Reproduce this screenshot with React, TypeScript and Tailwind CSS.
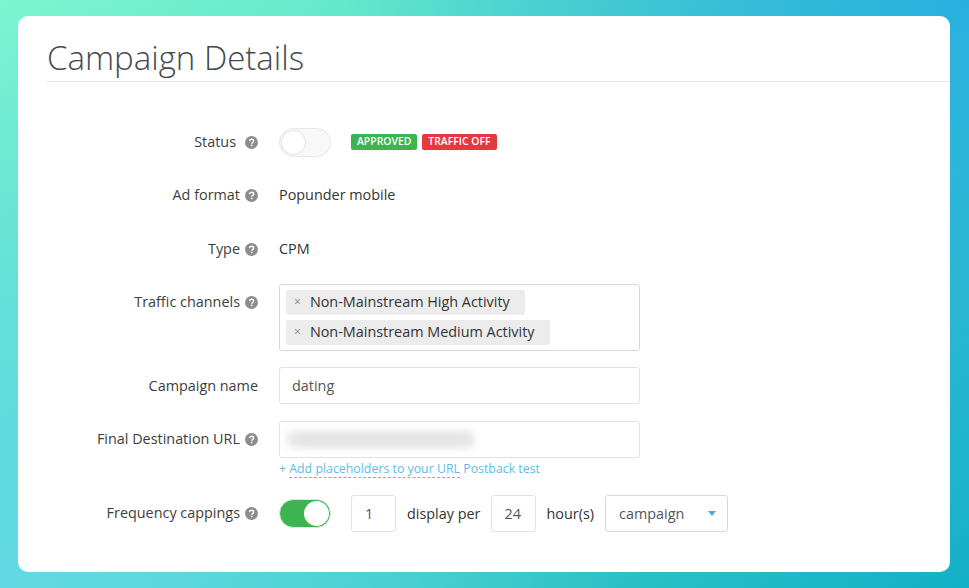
const font = "font-['Open_Sans',sans-serif]";

function Help() {
  return (
    <svg viewBox="0 0 24 24" className="ml-[5px] h-[13px] w-[13px] shrink-0">
      <circle cx="12" cy="12" r="12" fill="#8c8c8c" />
      <path d="M8.2 9.4c.2-2.2 1.8-3.5 3.9-3.5 2.2 0 3.8 1.3 3.8 3.2 0 1.5-.8 2.3-2 3.1-.9.6-1.3 1-1.3 2" fill="none" stroke="#fff" strokeWidth="2.6" />
      <rect x="10.9" y="16" width="2.8" height="2.8" fill="#fff" />
    </svg>
  );
}

type RowProps = {
  label: string;
  help?: boolean;
  children: React.ReactNode;
  className?: string;
  labelClass?: string;
};

function Row({ label, help = true, children, className = '', labelClass = '' }: RowProps) {
  return (
    <div className={`flex ${className}`}>
      <div className="flex w-[211px] shrink-0 items-center justify-end text-[14.4px] text-[#3d3d3d]">
        <span className={labelClass}>{label}</span>
        {help && <Help />}
      </div>
      <div className="ml-[21px] flex items-center text-[14.4px] text-[#333]">{children}</div>
    </div>
  );
}

function Toggle({ on }: { on?: boolean }) {
  return (
    <div className={`flex h-[29px] w-[52px] items-center rounded-full border border-[#e6e6e6] ${on ? 'justify-end border-[#3cb44f] bg-[#3cb44f]' : 'bg-[#f8f8f8]'}`}>
      <div className={`h-[25px] w-[25px] rounded-full bg-white ${on ? 'mr-px' : 'ml-px border border-[#e2e2e2]'}`} />
    </div>
  );
}

function Tag({ text }: { text: string }) {
  return (
    <div className="flex h-[25px] items-center rounded-[2px] bg-[#ececec] pr-[15px] pb-[2px] pl-[8px] text-[14.4px] text-[#333]">
      <span className="mr-[9px] text-[12px] text-[#888]">×</span>
      {text}
    </div>
  );
}

export default function App() {
  return (
    <div className={`${font} h-[588px] w-[969px] overflow-hidden bg-[image:radial-gradient(circle_at_100%_0%,#2ab0e0_0%,transparent_55%),radial-gradient(circle_at_0%_100%,#62d8e4_0%,transparent_55%),linear-gradient(135deg,#7ef8ce_0%,#12b0c4_100%)] pt-4 pl-[18px]`}>
      <div className="h-[556px] w-[932px] rounded-[10px] bg-white pt-[20px] pl-[29px]">
        <h1 className="h-[46px] border-b border-[#e4e4e4] text-[33px] leading-[44px] font-light text-[#454a50]">Campaign Details</h1>

        <div className="mt-[45px] flex flex-col">
          <Row label="Status" labelClass="mr-[4px]" className="h-[30px]">
            <Toggle />
            <span className="ml-[20px] flex h-[16px] items-center rounded-[2px] bg-[#3cb44f] px-[6px] text-[10.4px] font-semibold text-white">APPROVED</span>
            <span className="ml-[5px] flex h-[16px] items-center rounded-[2px] bg-[#e8383f] px-[6px] text-[10.4px] font-semibold text-white">TRAFFIC OFF</span>
          </Row>
          <Row label="Ad format" className="mt-[23px] h-[30px]">Popunder mobile</Row>
          <Row label="Type" className="mt-[24px] h-[30px]">CPM</Row>

          <div className="mt-[20px] flex">
            <div className="flex h-[37px] w-[211px] shrink-0 items-center justify-end text-[14.4px] text-[#3d3d3d]">
              <span className="pb-[2px]">Traffic channels</span>
              <Help />
            </div>
            <div className="ml-[21px] flex h-[67px] w-[361px] flex-col items-start gap-[5px] rounded-[3px] border border-[#d9d9d9] pt-[5px] pl-[6px]">
              <Tag text="Non-Mainstream High Activity" />
              <Tag text="Non-Mainstream Medium Activity" />
            </div>
          </div>

          <Row label="Campaign name" help={false} className="mt-[16px] h-[37px]">
            <div className="flex h-full w-[361px] items-center rounded-[3px] border border-[#e2e2e2] pl-[12px] text-[#555]">dating</div>
          </Row>

          <Row label="Final Destination URL" labelClass="pb-[2px]" className="mt-[17px] h-[37px]">
            <div className="flex h-full w-[361px] items-center rounded-[3px] border border-[#e2e2e2] pl-[7px]">
              <div className="h-[17px] w-[188px] rounded-full bg-[#e4e4e4] blur-[4px]" />
            </div>
          </Row>
          <div className="mt-px ml-[232px] h-[20px] text-[12.35px] leading-[20px] text-[#5cbde4]">
            + <span className="border-b border-dashed border-[#5cbde4]">Add placeholders to your URL</span> Postback test
          </div>

          <Row label="Frequency cappings" labelClass="pb-[2px]" className="mt-[16px] h-[37px]">
            <Toggle on />
            <div className="ml-[20px] flex h-[37px] w-[45px] items-center rounded-[3px] border border-[#e2e2e2] pl-[13px] text-[#555]">1</div>
            <span className="ml-[11px]">display per</span>
            <div className="ml-[11px] flex h-[37px] w-[45px] items-center rounded-[3px] border border-[#e2e2e2] pl-[12px] text-[#555]">24</div>
            <span className="ml-[10px]">hour(s)</span>
            <div className="ml-[11px] flex h-[37px] w-[123px] items-center justify-between rounded-[3px] border border-[#d9d9d9] pr-[11px] pl-[13px] text-[#555]">
              campaign
              <span className="h-0 w-0 border-x-[4px] border-t-[5px] border-x-transparent border-t-[#45aee0]" />
            </div>
          </Row>
        </div>
      </div>
    </div>
  );
}
